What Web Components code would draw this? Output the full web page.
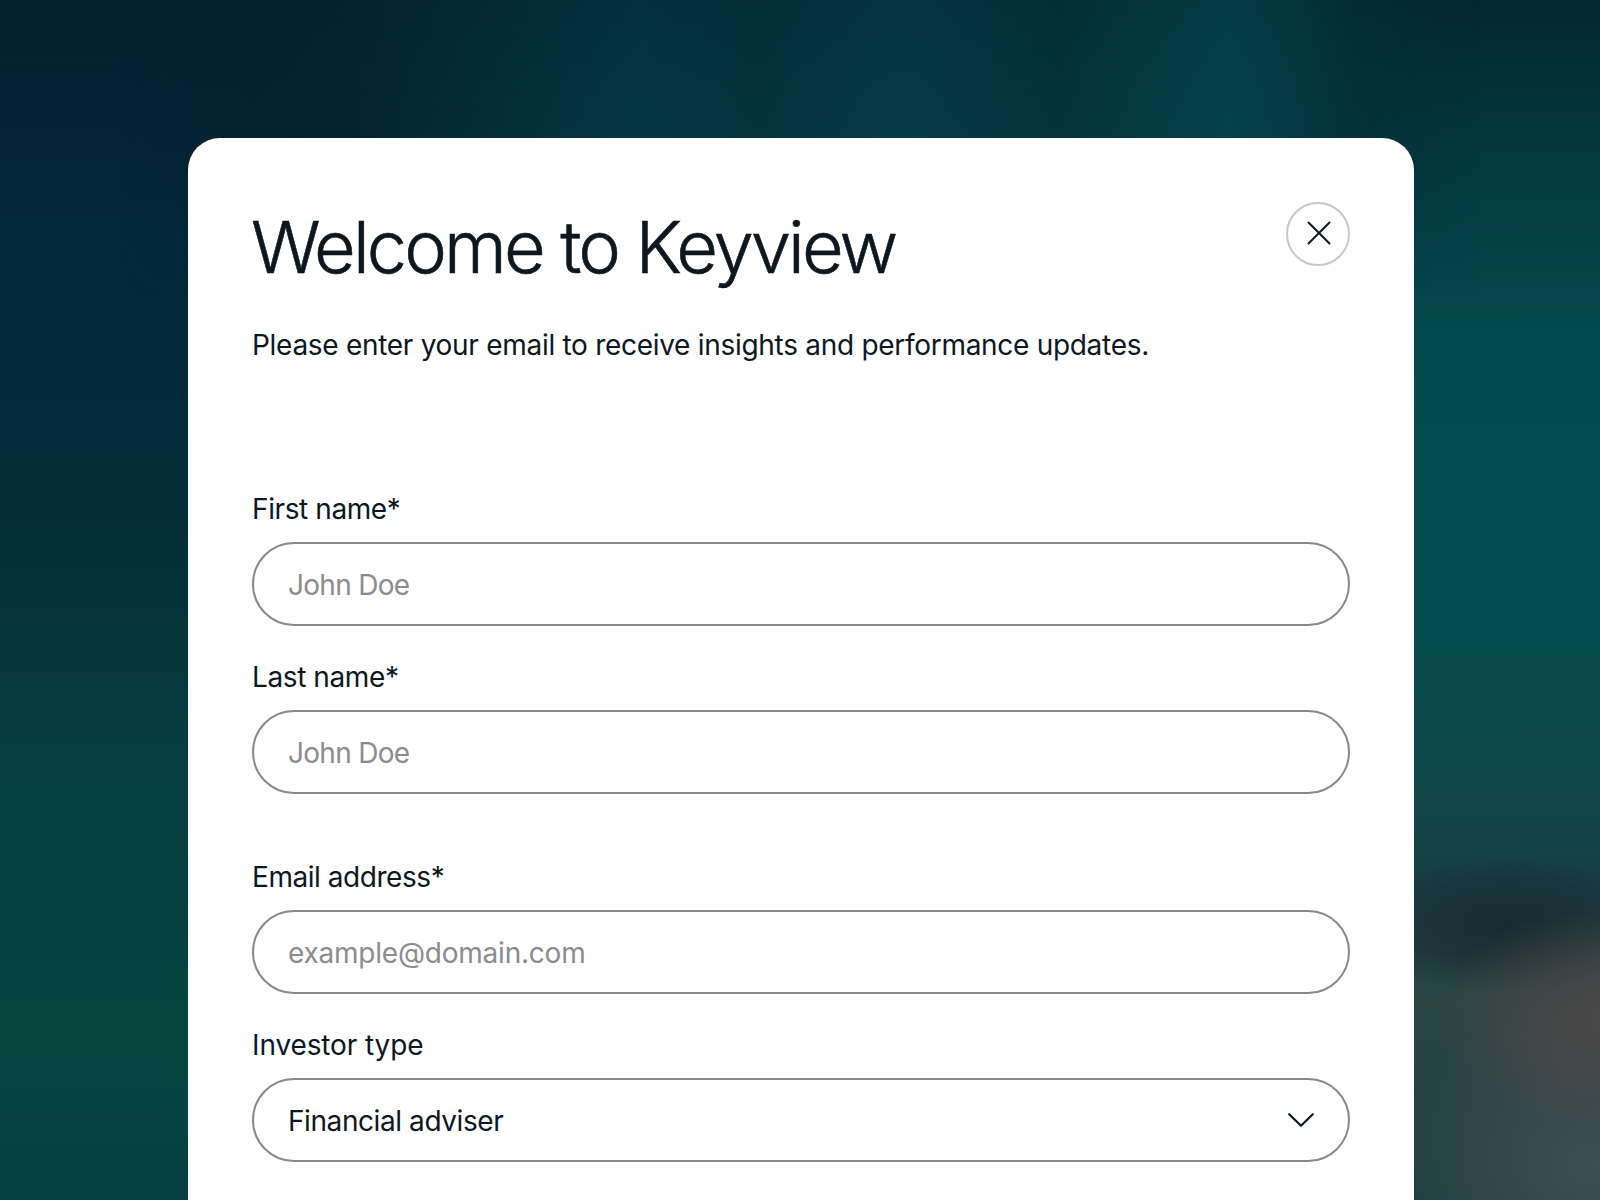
<!DOCTYPE html>
<html lang="en">
<head>
<meta charset="utf-8">
<title>Welcome to Keyview</title>
<style>
  html, body { margin: 0; padding: 0; height: 100%; }
  body { font-family: "Inter", "Liberation Sans", sans-serif; color: #0d171f; background: #04323c; }
</style>
</head>
<body>
<kv-backdrop>
  <kv-dialog heading="Welcome to Keyview" intro="Please enter your email to receive insights and performance updates.">
    <kv-section>
      <kv-field label="First name*" placeholder="John Doe" style="--text-track:-0.7px;--label-track:-0.4px"></kv-field>
      <kv-field label="Last name*" placeholder="John Doe" style="--text-track:-0.7px;--label-track:-0.4px"></kv-field>
    </kv-section>
    <kv-section>
      <kv-field label="Email address*" placeholder="example@domain.com" style="--text-track:-0.22px;--label-track:-0.45px"></kv-field>
      <kv-select label="Investor type" value="Financial adviser" style="--text-track:-0.42px;--label-track:-0.12px"></kv-select>
    </kv-section>
  </kv-dialog>
</kv-backdrop>

<script>
  // blurred teal photo behind the dialog, only its edges show
  class KvBackdrop extends HTMLElement {
    constructor() {
      super();
      const shadowRoot = this.attachShadow({ mode: 'open' });
      shadowRoot.innerHTML = `
        <style>
          :host {
            position: relative;
            display: flex;
            align-items: flex-start;
            box-sizing: border-box;
            height: 1200px;
            padding: 138px 186px 0 188px;
            overflow: hidden;
            background: linear-gradient(180deg,
              #051e2e 0, #03293c 230px, #042c38 500px, #053539 640px,
              #063f42 780px, #05403f 920px, #05473f 1030px, #063f42 1200px);
          }
          /* right hand side, with the warm blur low in the corner */
          :host::before {
            content: "";
            position: absolute;
            inset: 0;
            background:
              radial-gradient(ellipse 180px 115px at 1615px 1020px, rgba(78,72,72,.95) 0, rgba(78,72,72,.6) 50%, rgba(78,72,72,0) 100%),
              radial-gradient(ellipse 200px 170px at 1595px 1165px, rgba(62,78,84,1) 0, rgba(62,78,84,.6) 50%, rgba(62,78,84,0) 100%),
              radial-gradient(ellipse 160px 68px at 1510px 925px, rgba(24,40,48,.95) 0, rgba(24,40,48,.6) 50%, rgba(24,40,48,0) 100%),
              linear-gradient(180deg,
                #04282e 0, #033840 155px, #04484c 310px, #044c50 460px,
                #044c50 615px, #0a4a4c 700px, #124648 810px, #163f44 880px,
                #2a4444 1000px, #1e3e40 1200px);
            -webkit-mask-image: linear-gradient(90deg, transparent 60%, #000 86%);
            mask-image: linear-gradient(90deg, transparent 60%, #000 86%);
          }
          /* soft vertical bands along the top, faded out to both sides */
          :host::after {
            content: "";
            position: absolute;
            inset: 0;
            background: linear-gradient(90deg,
              #04202e 0, #03242f 340px, #04303a 530px, #043644 640px,
              #04333c 760px, #053a48 900px, #04333a 1060px, #04424a 1230px,
              #04303a 1360px, #03252e 1600px);
            -webkit-mask-image:
              linear-gradient(180deg, rgba(0,0,0,.75) 0, #000 130px, #000 170px, transparent 300px),
              linear-gradient(90deg, transparent 120px, #000 340px, #000 1300px, transparent 1480px);
            -webkit-mask-composite: source-in;
            mask-image:
              linear-gradient(180deg, rgba(0,0,0,.75) 0, #000 130px, #000 170px, transparent 300px),
              linear-gradient(90deg, transparent 120px, #000 340px, #000 1300px, transparent 1480px);
            mask-composite: intersect;
          }
        </style>
        <slot></slot>
      `;
    }
  }

  class KvDialog extends HTMLElement {
    constructor() {
      super();
      const shadowRoot = this.attachShadow({ mode: 'open' });
      shadowRoot.innerHTML = `
        <style>
          :host {
            position: relative;
            z-index: 1;
            display: block;
            box-sizing: border-box;
            width: 1226px;
            flex: none;
            padding: 64px 64px 120px;
            background: #fff;
            border-radius: 32px;
          }
          .top {
            display: flex;
            justify-content: space-between;
            align-items: flex-start;
          }
          h1 {
            margin: -1px 0 0 -1px;
            font-size: 72px;
            line-height: 92px;
            font-weight: 300;
            -webkit-text-stroke: 0.6px #0d171f; /* Inter only has 300 and 400 here */
            letter-spacing: -2.87px;
            color: #0d171f;
          }
          p {
            margin: 32px 0 0;
            font-size: 28px;
            line-height: 40px;
            font-weight: 400;
            letter-spacing: -0.29px;
            color: #0d171f;
          }
          .body {
            display: flex;
            flex-direction: column;
            gap: 65px;
            margin-top: 126px;
          }
        </style>
        <div class="top">
          <h1></h1>
          <kv-close></kv-close>
        </div>
        <p></p>
        <div class="body"><slot></slot></div>
      `;
    }

    connectedCallback() {
      this.shadowRoot.querySelector('h1').textContent = this.getAttribute('heading');
      this.shadowRoot.querySelector('p').textContent = this.getAttribute('intro');
    }
  }

  class KvClose extends HTMLElement {
    constructor() {
      super();
      const shadowRoot = this.attachShadow({ mode: 'open' });
      shadowRoot.innerHTML = `
        <style>
          :host {
            display: flex;
            align-items: center;
            justify-content: center;
            box-sizing: border-box;
            flex: none;
            width: 64px;
            height: 64px;
            border: 2px solid #c8c8c8;
            border-radius: 50%;
          }
          svg { display: block; margin: 0 0 2px 2px; }
        </style>
        <svg width="24" height="24" viewBox="0 0 24 24" fill="none" stroke="#0d171f" stroke-width="2" stroke-linecap="round">
          <path d="M1.5 1.5 22.5 22.5M22.5 1.5 1.5 22.5"/>
        </svg>
      `;
    }
  }

  class KvSection extends HTMLElement {
    constructor() {
      super();
      const shadowRoot = this.attachShadow({ mode: 'open' });
      shadowRoot.innerHTML = `
        <style>
          :host { display: flex; flex-direction: column; gap: 33px; }
        </style>
        <slot></slot>
      `;
    }
  }

  const fieldStyles = `
    :host { display: flex; flex-direction: column; gap: 15px; }
    label {
      font-size: 28px;
      line-height: 36px;
      letter-spacing: var(--label-track, -0.3px);
      color: #0d171f;
    }
    .box {
      display: flex;
      align-items: center;
      justify-content: space-between;
      box-sizing: border-box;
      height: 84px;
      padding: 0 34px;
      border: 2px solid #88898b;
      border-radius: 42px;
      font-size: 28px;
      letter-spacing: var(--text-track, -0.35px);
      color: #0d171f;
    }
    .box span { padding-top: 2px; }
  `;

  class KvField extends HTMLElement {
    constructor() {
      super();
      const shadowRoot = this.attachShadow({ mode: 'open' });
      shadowRoot.innerHTML = `
        <style>${fieldStyles}
          .ph { color: #8a8c8e; }
        </style>
        <label></label>
        <div class="box"><span class="ph"></span></div>
      `;
    }

    connectedCallback() {
      this.shadowRoot.querySelector('label').textContent = this.getAttribute('label');
      this.shadowRoot.querySelector('.ph').textContent = this.getAttribute('placeholder');
    }
  }

  class KvSelect extends HTMLElement {
    constructor() {
      super();
      const shadowRoot = this.attachShadow({ mode: 'open' });
      shadowRoot.innerHTML = `
        <style>${fieldStyles}
          svg { display: block; flex: none; margin-bottom: 1px; }
        </style>
        <label></label>
        <div class="box">
          <span class="val"></span>
          <svg width="26" height="14" viewBox="0 0 26 14" fill="none" stroke="#0d171f" stroke-width="2.2" stroke-linecap="round" stroke-linejoin="round">
            <path d="M1.2 1.2 13 12.8 24.8 1.2"/>
          </svg>
        </div>
      `;
    }

    connectedCallback() {
      this.shadowRoot.querySelector('label').textContent = this.getAttribute('label');
      this.shadowRoot.querySelector('.val').textContent = this.getAttribute('value');
    }
  }

  customElements.define('kv-backdrop', KvBackdrop);
  customElements.define('kv-dialog', KvDialog);
  customElements.define('kv-close', KvClose);
  customElements.define('kv-section', KvSection);
  customElements.define('kv-field', KvField);
  customElements.define('kv-select', KvSelect);
</script>
</body>
</html>
